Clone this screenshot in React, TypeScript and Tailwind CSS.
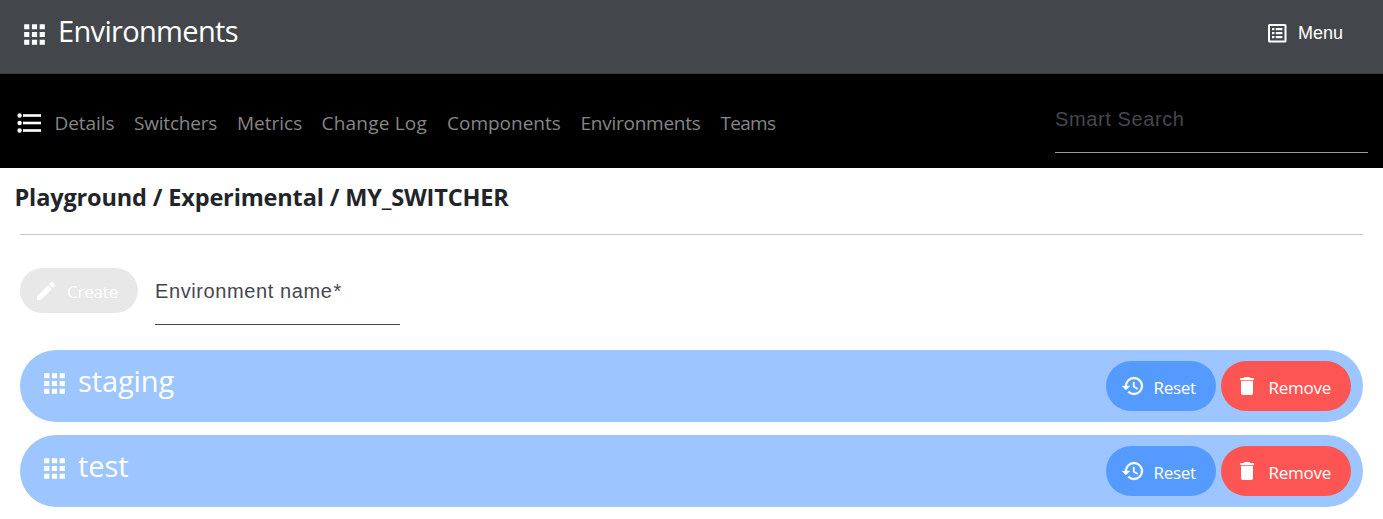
import type { ReactNode } from 'react';
import { MdApps, MdEdit } from 'react-icons/md';

const links = [
  { label: 'Details', style: 'w-[79.5px] tracking-[-0.05px]' },
  { label: 'Switchers', style: 'w-[103px] tracking-[-0.2px]' },
  { label: 'Metrics', style: 'w-[84.5px] tracking-[0px]' },
  { label: 'Change Log', style: 'w-[125.5px] tracking-[0.2px]' },
  { label: 'Components', style: 'w-[133.5px] tracking-[0px]' },
  { label: 'Environments', style: 'w-[140px] tracking-[-0.25px]' },
  { label: 'Teams', style: 'w-[60px] tracking-[-0.7px]' },
];

function TrashIcon() {
  return (
    <svg viewBox="0 0 24 24" fill="currentColor" className="size-6">
      <path d="M9.6 3h4.8l1 1H18a1 1 0 0 1 0 2.2H6A1 1 0 0 1 6 4h2.6z" />
      <path d="M6 6.9h12V19a2 2 0 0 1-2 2H8a2 2 0 0 1-2-2z" />
    </svg>
  );
}

function ListIcon() {
  return (
    <svg viewBox="0 0 32 32" fill="currentColor" className="mt-[33px] size-8 shrink-0 text-white">
      <circle cx="6.6" cy="8.5" r="2.2" />
      <circle cx="6.6" cy="16" r="2.2" />
      <circle cx="6.6" cy="23.5" r="2.2" />
      <rect x="10" y="7.2" width="18" height="2.6" />
      <rect x="10" y="14.7" width="18" height="2.6" />
      <rect x="10" y="22.2" width="18" height="2.6" />
    </svg>
  );
}

function MenuIcon() {
  return (
    <svg viewBox="0 0 24 24" fill="currentColor" className="size-6">
      <rect x="4" y="4" width="16.5" height="16.5" rx="0.6" fill="none" stroke="currentColor" strokeWidth="2" />
      <rect x="7" y="7" width="2.4" height="2.2" />
      <rect x="7" y="11" width="2.4" height="2.2" />
      <rect x="7" y="15" width="2.4" height="2.2" />
      <rect x="10.8" y="7" width="6.6" height="2.2" />
      <rect x="10.8" y="11" width="6.6" height="2.2" />
      <rect x="10.8" y="15" width="6.6" height="2.2" />
    </svg>
  );
}

function HistoryIcon() {
  return (
    <svg viewBox="0 0 24 24" fill="currentColor" stroke="currentColor" strokeWidth="0.3" className="size-6">
      <path d="M13 3a9 9 0 0 0-9 9H1l3.89 3.89.07.14L9 12H6c0-3.87 3.13-7 7-7s7 3.13 7 7-3.13 7-7 7c-1.93 0-3.68-.79-4.94-2.06l-1.42 1.42A8.954 8.954 0 0 0 13 21a9 9 0 0 0 0-18zm-1 5v5l4.28 2.54.72-1.21-3.5-2.08V8H12z" />
    </svg>
  );
}

function Pill({ className, children }: { className: string; children: ReactNode }) {
  return (
    <button className={`flex items-center rounded-full text-[18px] text-white ${className}`}>
      {children}
    </button>
  );
}

function EnvironmentRow({ name }: { name: string }) {
  return (
    <div className="flex h-[72px] items-start rounded-full bg-[#9dc5ff] pl-[19px] pr-3 text-white">
      <MdApps className="mt-[18px] size-[31px] shrink-0" />
      <span className="ml-[8px] mt-[10px] text-[29px] leading-[42px] tracking-[-0.1px]">{name}</span>
      <div className="ml-auto mt-[11px] flex gap-[5px]">
        <Pill className="h-[50px] w-[110px] bg-[#559bff] pl-[15px]">
          <HistoryIcon />
          <span className="ml-[8.5px] mt-[3px] text-[17px] tracking-[-0.3px]">Reset</span>
        </Pill>
        <Pill className="h-[50px] w-[130px] bg-[#fd5554] pl-[14px]">
          <TrashIcon />
          <span className="ml-[9.5px] mt-[3px] text-[17px] tracking-[-0.25px]">Remove</span>
        </Pill>
      </div>
    </div>
  );
}

export default function App() {
  return (
    <div className="h-[519px] overflow-hidden bg-white font-['Open_Sans','Noto_Sans',sans-serif]">
      <header className="flex h-[74px] items-start border-b border-[#3b3e42] bg-[#43474c] pl-[19px] pr-10 text-white">
        <MdApps className="mt-[19px] size-[31px] shrink-0" />
        <h1 className="ml-[8px] mt-[10px] text-[29px] leading-[42px] tracking-[-0.67px]">Environments</h1>
        <button className="ml-auto mt-[21px] flex h-6 items-center font-['Liberation_Sans',sans-serif] text-[18px]">
          <MenuIcon />
          <span className="ml-[9px]">Menu</span>
        </button>
      </header>

      <nav className="flex h-[94px] items-start bg-black pl-[13px] pr-[15px] text-[#868686]">
        <ListIcon />
        <div className="ml-[9.5px] mt-[34px] flex text-[19px] leading-[30px]">
          {links.map(({ label, style }) => (
            <a key={label} className={`whitespace-nowrap ${style}`}>{label}</a>
          ))}
        </div>
        <div className="ml-auto h-[79px] w-[313px] border-b border-[#999] pt-[30px] font-['Liberation_Sans',sans-serif] text-[20px] leading-[30px] tracking-[0.6px] text-[#46464f]">
          Smart Search
        </div>
      </nav>

      <main className="px-5">
        <h2 className="-ml-[5.5px] h-[66px] pt-[11px] text-[23.5px] font-bold leading-[36px] tracking-[-0.15px] text-[#212529]">
          Playground / Experimental / MY_SWITCHER
        </h2>
        <hr className="border-t border-[#c7c8c9]" />
        <div className="flex h-[115px] items-start">
          <Pill className="mt-[33px] h-[45px] w-[118px] bg-[#e8e8e8] pl-[14px]">
            <MdEdit className="size-6" />
            <span className="ml-[9px] mt-[3px] text-[17px] tracking-[-0.2px]">Create</span>
          </Pill>
          <div className="ml-[17px] mt-[33px] h-[57px] w-[245px] border-b border-[#46464f] pt-[8px] font-['Liberation_Sans',sans-serif] text-[20px] leading-[30px] tracking-[0.6px] text-[#46464f]">
            Environment name<span className="ml-px">*</span>
          </div>
        </div>
        <div className="flex flex-col gap-[13px]">
          <EnvironmentRow name="staging" />
          <EnvironmentRow name="test" />
        </div>
      </main>
    </div>
  );
}
